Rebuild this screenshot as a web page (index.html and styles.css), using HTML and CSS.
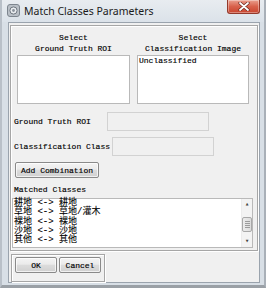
FILE: index.html
```html
<!DOCTYPE html>
<html>
<head>
	<meta charset="utf-8">
	<title>Match Classes Parameters</title>
	<link rel="stylesheet" href="styles.css">
</head>
<body>
	<div class="window">
		<div class="window__title">
			<svg class="window__icon" width="13" height="13" viewBox="0 0 13 13">
				<rect x="0.5" y="0.5" width="12" height="12" rx="2.5" fill="#b9bfc6" stroke="#7d858e"/>
				<circle cx="6.5" cy="6.5" r="3.6" fill="#e9ecef" stroke="#6f7780"/>
				<circle cx="6.5" cy="6.5" r="1.4" fill="#8a929b"/>
			</svg>
			<span class="window__caption">Match Classes Parameters</span>
			<div class="window__close">
				<svg width="12" height="9" viewBox="0 0 12 9">
					<path d="M2 1 L10 8 M10 1 L2 8" stroke="#6b2a20" stroke-width="3.2" stroke-linecap="round"/>
					<path d="M2 1 L10 8 M10 1 L2 8" stroke="#fff" stroke-width="1.8" stroke-linecap="round"/>
				</svg>
			</div>
		</div>

		<div class="client">
			<div class="panel panel_main">
				<div class="pick">
					<div class="pick__col">
						<div class="pick__head">Select<br>Ground Truth ROI</div>
						<div class="listbox"></div>
					</div>
					<div class="pick__col">
						<div class="pick__head">Select<br>Classification Image</div>
						<div class="listbox">
							<div class="listbox__item">Unclassified</div>
						</div>
					</div>
				</div>

				<div class="field-row field-row_first">
					<span class="field-row__label field-row__label_roi">Ground Truth ROI</span>
					<span class="field"></span>
				</div>
				<div class="field-row">
					<span class="field-row__label field-row__label_class">Classification Class</span>
					<span class="field"></span>
				</div>

				<button class="btn btn_add">Add Combination</button>

				<div class="matched-label">Matched Classes</div>
				<div class="matched">
					<div class="matched__items">
						<div>耕地 &lt;-&gt; 耕地</div>
						<div>草地 &lt;-&gt; 草地/灌木</div>
						<div>裸地 &lt;-&gt; 裸地</div>
						<div>沙地 &lt;-&gt; 沙地</div>
						<div>其他 &lt;-&gt; 其他</div>
					</div>
					<div class="scroll">
						<div class="scroll__arrow">&#9652;</div>
						<div class="scroll__track">
							<div class="scroll__thumb">
								<i></i><i></i><i></i><i></i>
							</div>
						</div>
						<div class="scroll__arrow">&#9662;</div>
					</div>
				</div>
			</div>

			<div class="panel panel_buttons">
				<button class="btn btn_ok">OK</button>
				<button class="btn btn_cancel">Cancel</button>
			</div>
		</div>
	</div>
</body>
</html>
```

FILE: styles.css
```css
body {
	margin: 0;
	background: #7c8288;
	font-family: "Liberation Mono", "Noto Sans CJK SC", monospace;
	font-size: 8px;
	color: #000;
	-webkit-text-stroke: 0.15px #000;
}

.window {
	width: 266px;
	height: 288px;
	display: flex;
	flex-direction: column;
	background: #d8dfe6;
	box-sizing: border-box;
	border-left: 2px solid #b9c0c8;
	border-right: 2px solid #a9b0b8;
	border-bottom: 3px solid #9aa0a6;
}
	.window__title {
		height: 22px;
		display: flex;
		align-items: center;
		position: relative;
		padding-left: 5px;
		background: linear-gradient(#e8ecf0, #dbe2e9);
	}
	.window__icon {
		margin-top: -1px;
	}
	.window__caption {
		margin-left: 4px;
		font-family: "Noto Sans", "Liberation Sans", sans-serif;
		font-size: 10.5px;
		color: #1b1b1b;
		-webkit-text-stroke: 0;
	}
	.window__close {
		position: absolute;
		top: 0;
		right: 4px;
		width: 31px;
		height: 13px;
		display: flex;
		align-items: center;
		justify-content: center;
		border: 1px solid #93392b;
		border-top: 0;
		border-radius: 0 0 3px 3px;
		background: linear-gradient(#eaa08f, #d8614b 50%, #c8452f);
		box-shadow: inset 0 0 0 1px rgba(255,255,255,.35);
	}

.client {
	flex: 1;
	margin: 0 4px 2px 6px;
	background: #f0f0f0;
	border: 1px solid #9aa3ad;
	padding: 2px 0 0 1px;
}

.panel {
	border: 1px solid #a6a6a6;
	box-shadow: inset 1px 1px 0 #fff, 1px 1px 0 #fff;
	box-sizing: border-box;
}
	.panel_main {
		width: 248px;
		padding: 6px 0 2px;
	}
	.panel_buttons {
		width: 94px;
		height: 28px;
		margin: 3px 0 0 1px;
		padding: 2px 0 0 3px;
		display: flex;
		gap: 2px;
	}

.pick {
	display: grid;
	grid-template-columns: 113px 112px;
	column-gap: 7px;
	padding-left: 6px;
}
	.pick__head {
		line-height: 11px;
		text-align: center;
		margin-bottom: 1px;
	}

.listbox {
	height: 49px;
	box-sizing: border-box;
	background: #fff;
	border: 1px solid #b9b9b9;
	padding-left: 1px;
}
	.listbox__item {
		line-height: 10px;
	}

.field-row {
	display: flex;
	align-items: center;
	padding-left: 3px;
	margin-top: 6px;
}
	.field-row_first {
		margin-top: 8px;
	}
	.field-row__label_roi { width: 93px; }
	.field-row__label_class { width: 98px; }

.field {
	width: 102px;
	height: 19px;
	box-sizing: border-box;
	border: 1px solid #d2d2d2;
	background: #f0f0f0;
}

.btn {
	display: block;
	height: 16px;
	padding: 0;
	box-sizing: border-box;
	border: 1px solid #8a8a8a;
	border-radius: 2px;
	font-family: inherit;
	font-size: 8px;
	color: #000;
	background: linear-gradient(#f4f4f4, #ebebeb 45%, #dcdcdc 50%, #d0d0d0);
	box-shadow: inset 0 0 0 1px rgba(255,255,255,.7);
}
	.btn_add {
		width: 84px;
		margin: 6px 0 0 4px;
	}
	.btn_ok,
	.btn_cancel {
		width: 42px;
	}

.matched-label {
	line-height: 11px;
	margin: 6px 0 0 3px;
}

.matched {
	width: 241px;
	height: 50px;
	margin: 3px 0 0 1px;
	box-sizing: border-box;
	border: 1px solid #b9b9b9;
	background: #fff;
	display: flex;
}
	.matched__items {
		flex: 1;
		padding-left: 1px;
		font-size: 9px;
		line-height: 9.3px;
		-webkit-text-stroke: 0.1px #000;
	}

.scroll {
	width: 10px;
	display: flex;
	flex-direction: column;
	background: #f3f3f3;
	border-left: 1px solid #ececec;
	-webkit-text-stroke: 0;
}
	.scroll__arrow {
		height: 11px;
		font-size: 7px;
		line-height: 11px;
		text-align: center;
		color: #444;
	}
	.scroll__track {
		flex: 1;
		padding-top: 7px;
	}
	.scroll__thumb {
		height: 15px;
		box-sizing: border-box;
		border: 1px solid #a8a8a8;
		border-radius: 2px;
		background: linear-gradient(90deg, #ececec, #dcdcdc);
		display: flex;
		flex-direction: column;
		justify-content: center;
		align-items: center;
		gap: 1px;
	}
		.scroll__thumb i {
			width: 5px;
			height: 1px;
			background: #9c9c9c;
		}
```
